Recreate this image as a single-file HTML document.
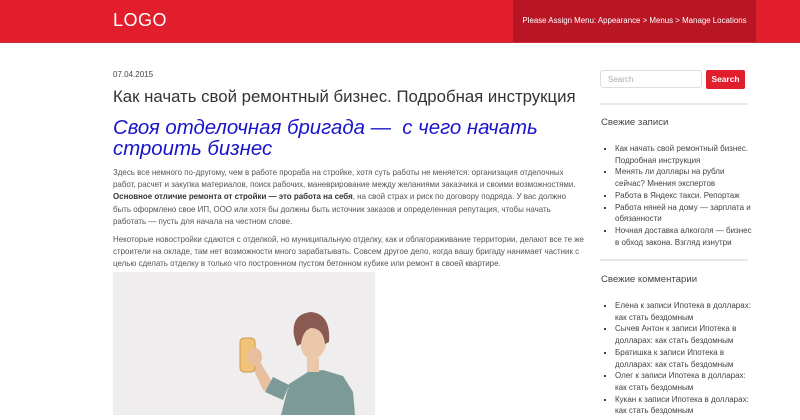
<!DOCTYPE html><html><head><meta charset="utf-8"><style>
body{margin:0;width:800px;height:415px;overflow:hidden;background:#fff;font-family:"Liberation Sans",sans-serif;color:#555;position:relative}
.hdr{position:absolute;left:0;top:0;width:800px;height:42px;background:#e21d2c;border-bottom:1px solid #c9303a}
.logo{position:absolute;left:113px;top:10px;color:#fff;font-size:18px;letter-spacing:.5px}
.menu{position:absolute;left:513px;top:0;width:243px;height:42px;background:#b91625;color:#fff;font-size:7.9px;line-height:42px;text-align:center;white-space:nowrap}
.a{position:absolute}
p{margin:0}
.body{font-size:7.95px;line-height:12.2px;color:#555}
ul{margin:0;padding:0 0 0 14px;font-size:8px;line-height:11.7px;color:#444;list-style:square}
hr{border:0;border-top:2px solid #e8e8e8;margin:0}
</style></head><body>
<div class="hdr"><div class="logo">LOGO</div><div class="menu">Please Assign Menu: Appearance &gt; Menus &gt; Manage Locations</div></div>
<div class="a" style="left:113px;top:70px;font-size:8px;color:#444">07.04.2015</div>
<div class="a" style="left:113px;top:87px;font-size:16.8px;color:#333;white-space:nowrap">Как начать свой ремонтный бизнес. Подробная инструкция</div>
<div class="a" style="left:113px;top:118px;font-size:20.4px;line-height:21px;font-style:italic;color:#1a14c8;width:440px">Своя отделочная бригада —&nbsp; с чего начать строить бизнес</div>
<div class="a body" style="left:113px;top:167px;width:472px">
<p>Здесь все немного по-другому, чем в работе прораба на стройке, хотя суть работы не меняется: организация отделочных работ, расчет и закупка материалов, поиск рабочих, маневрирование между желаниями заказчика и своими возможностями. <b style="color:#333">Основное отличие ремонта от стройки — это работа на себя</b>, на свой страх и риск по договору подряда. У вас должно быть оформлено свое ИП, ООО или хотя бы должны быть источник заказов и определенная репутация, чтобы начать работать — пусть для начала на честном слове.</p>
<p style="margin-top:6px">Некоторые новостройки сдаются с отделкой, но муниципальную отделку, как и облагораживание территории, делают все те же строители на окладе, там нет возможности много зарабатывать. Совсем другое дело, когда вашу бригаду нанимает частник с целью сделать отделку в только что построенном пустом бетонном кубике или ремонт в своей квартире.</p></div>
<div class="a" style="left:113px;top:272px;width:262px;height:143px;background:#efeded">
<svg width="262" height="143" viewBox="0 0 262 143">
<path d="M168 143 L176 112 L195 100 L210 98 L230 104 L240 120 L242 143 Z" fill="#7c9a98"/>
<path d="M138 92 L150 118 L168 126 L176 116 L158 108 L146 88 Z" fill="#e8c0a0"/>
<path d="M160 105 L176 113 L170 128 L152 120 Z" fill="#7c9a98"/>
<rect x="127" y="66" width="15" height="34" rx="4" fill="#f2c27a" stroke="#c89a50" stroke-width="1"/>
<ellipse cx="142" cy="85" rx="7" ry="9" fill="#e8c0a0"/>
<path d="M186 62 Q186 50 198 50 Q213 52 214 68 Q212 84 200 88 Q190 86 188 76 Z" fill="#ecc8aa"/>
<path d="M181 64 Q178 42 198 40 Q218 42 216 70 L212 72 Q210 56 198 56 Q190 58 188 72 L184 74 Z" fill="#8a5a52"/>
<rect x="194" y="86" width="12" height="14" fill="#ecc8aa"/>
</svg></div>
<div class="a" style="left:600px;top:70px;width:102px;height:18px;border:1px solid #ddd;border-radius:3px;font-size:8px;color:#aaa;line-height:18px;padding-left:7px;box-sizing:border-box">Search</div>
<div class="a" style="left:706px;top:70px;width:39px;height:19px;background:#e21d2c;border-radius:2px;color:#fff;font-size:8.4px;font-weight:bold;line-height:19px;text-align:center">Search</div>
<div class="a" style="left:600px;top:103px;width:148px"><hr></div>
<div class="a" style="left:601px;top:117px;font-size:9.6px;color:#444">Свежие записи</div>
<div class="a" style="left:601px;top:143px;width:152px"><ul>
<li>Как начать свой ремонтный бизнес. Подробная инструкция</li><li>Менять ли доллары на рубли сейчас? Мнения экспертов</li><li>Работа в Яндекс такси. Репортаж</li><li>Работа няней на дому — зарплата и обязанности</li><li>Ночная доставка алкоголя — бизнес в обход закона. Взгляд изнутри</li></ul></div>
<div class="a" style="left:600px;top:259px;width:148px"><hr></div>
<div class="a" style="left:601px;top:274px;font-size:9.6px;color:#444">Свежие комментарии</div>
<div class="a" style="left:601px;top:300px;width:152px"><ul>
<li>Елена к записи Ипотека в долларах: как стать бездомным</li><li>Сычев Антон к записи Ипотека в долларах: как стать бездомным</li><li>Братишка к записи Ипотека в долларах: как стать бездомным</li><li>Олег к записи Ипотека в долларах: как стать бездомным</li><li>Кукан к записи Ипотека в долларах: как стать бездомным</li></ul></div>
</body></html>
